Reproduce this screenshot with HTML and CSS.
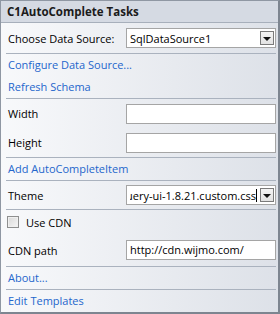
FILE: index.html
```html
<!DOCTYPE html>
<html lang="en">
<head>
    <meta charset="UTF-8">
    <title>C1AutoComplete Tasks</title>
    <link rel="stylesheet" href="styles.css">
</head>
<body>
    <div class="panel">
        <div class="header">C1AutoComplete Tasks</div>

        <div class="section">
            <div class="row row-select">
                <span class="label">Choose Data Source:</span>
                <div class="combo">
                    <span class="combo-text">SqlDataSource1</span>
                    <span class="combo-btn"><span class="arrow"></span></span>
                </div>
            </div>
        </div>

        <div class="section">
            <a class="link" href="#">Configure Data Source...</a>
            <a class="link" href="#">Refresh Schema</a>
        </div>

        <div class="section">
            <div class="row row-field">
                <span class="label">Width</span>
                <div class="textbox"></div>
            </div>
            <div class="row row-field">
                <span class="label">Height</span>
                <div class="textbox"></div>
            </div>
        </div>

        <div class="section">
            <a class="link" href="#">Add AutoCompleteItem</a>
        </div>

        <div class="section">
            <div class="row row-theme">
                <span class="label">Theme</span>
                <div class="combo">
                    <span class="combo-text scrolled"><span>jquery-ui-1.8.21.custom.css</span><span class="caret"></span></span>
                    <span class="combo-btn"><span class="arrow"></span></span>
                </div>
            </div>
        </div>

        <div class="section">
            <label class="check-row">
                <span class="checkbox"></span>
                <span>Use CDN</span>
            </label>
            <div class="row row-path">
                <span class="label">CDN path</span>
                <div class="textbox">http://cdn.wijmo.com/</div>
            </div>
        </div>

        <div class="section">
            <a class="link" href="#">About...</a>
        </div>

        <div class="section last">
            <a class="link" href="#">Edit Templates</a>
        </div>
    </div>
</body>
</html>
```

FILE: styles.css
```css
* {
    margin: 0;
    padding: 0;
    box-sizing: border-box;
}

body {
    font-family: 'Open Sans', 'Noto Sans', sans-serif;
    font-size: 11px;
    color: #000;
    background: #fff;
}

.panel {
    width: 280px;
    height: 314px;
    border: 1px solid #8f97a3;
    border-right: 2px solid #7d8590;
    border-bottom: 2px solid #7d8590;
    background: linear-gradient(to right, #f8f9fb, #dde1e8);
    overflow: hidden;
}

.header {
    height: 22px;
    line-height: 21px;
    padding-left: 6px;
    font-weight: bold;
    font-size: 11.5px;
    color: #1b1b1b;
    background: #d5dae3;
    border-bottom: 1px solid #a7afbb;
}

.section {
    margin: 0 2px 0 5px;
    border-bottom: 1px solid #aab2be;
}

.section.last {
    border-bottom: none;
}

.row {
    display: flex;
    align-items: center;
    justify-content: space-between;
    padding-left: 2px;
}

.row-select {
    height: 30px;
}

.row-field {
    height: 29px;
}

.row-theme {
    height: 28px;
}

.row-path {
    height: 32px;
}

.link {
    display: block;
    height: 22px;
    line-height: 22px;
    padding-left: 2px;
    color: #2466cc;
    text-decoration: none;
}

.textbox,
.combo {
    width: 150px;
    height: 20px;
    background: #fff;
    border: 1px solid #a5a5a5;
}

.textbox {
    line-height: 18px;
    padding-left: 3px;
    overflow: hidden;
    white-space: nowrap;
}

.combo {
    display: flex;
    align-items: center;
    padding: 0 1px 0 3px;
}

.combo-text {
    flex: 1;
    overflow: hidden;
    white-space: nowrap;
}

.combo-text.scrolled {
    display: flex;
    justify-content: flex-end;
    align-items: center;
}

.combo-text.scrolled span:first-child {
    flex-shrink: 0;
}

.caret {
    width: 1px;
    height: 13px;
    background: #000;
    flex-shrink: 0;
}

.combo-btn {
    width: 14px;
    height: 14px;
    margin-left: 3px;
    border: 1px solid #7a7a7a;
    background: linear-gradient(#f4f4f4, #e2e2e2);
    display: flex;
    align-items: center;
    justify-content: center;
}

.arrow {
    width: 0;
    height: 0;
    border-left: 4px solid transparent;
    border-right: 4px solid transparent;
    border-top: 4px solid #111;
    margin-top: 1px;
}

.check-row {
    display: flex;
    align-items: center;
    gap: 7px;
    height: 24px;
    padding-left: 1px;
}

.checkbox {
    width: 12px;
    height: 12px;
    border: 1px solid #8e8f8f;
    background: linear-gradient(135deg, #d8d8d8, #f6f6f6);
    box-shadow: inset 0 0 0 1px #f0f0f0;
}
```
